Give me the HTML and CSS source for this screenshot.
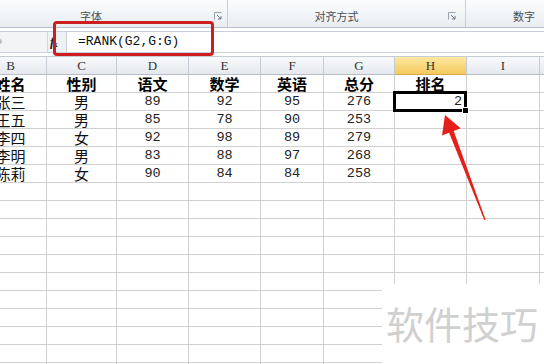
FILE: index.html
```html
<!DOCTYPE html>
<html lang="zh-CN">
<head>
    <meta charset="UTF-8">
    <title>RANK</title>
    <link rel="stylesheet" href="styles.css">
</head>
<body>
    <div class="page">
        <div class="ribbon">
            <div class="group group-font">
                <span class="group-label">字体</span>
                <svg class="launcher" width="8" height="8" viewBox="0 0 8 8"><path d="M0.5 7.5V0.5h7" fill="none" stroke="#9aa3ad"/><path d="M3 3l4 4M4 7h3V4" fill="none" stroke="#6d7782"/></svg>
            </div>
            <div class="group group-align">
                <span class="group-label">对齐方式</span>
                <svg class="launcher" width="8" height="8" viewBox="0 0 8 8"><path d="M0.5 7.5V0.5h7" fill="none" stroke="#9aa3ad"/><path d="M3 3l4 4M4 7h3V4" fill="none" stroke="#6d7782"/></svg>
            </div>
            <div class="group group-number">
                <span class="group-label">数字</span>
            </div>
        </div>

        <div class="formula-bar">
            <div class="name-box"><span class="dot"></span></div>
            <div class="fx"><i>f</i><sub>x</sub></div>
            <div class="formula">=RANK(G2,G:G)</div>
        </div>

        <div class="sheet">
            <div class="colhead">B</div><div class="colhead">C</div><div class="colhead">D</div><div class="colhead">E</div><div class="colhead">F</div><div class="colhead">G</div><div class="colhead active">H</div><div class="colhead">I</div><div class="colhead">J</div>

            <div class="cell title">姓名</div><div class="cell title">性别</div><div class="cell title">语文</div><div class="cell title">数学</div><div class="cell title">英语</div><div class="cell title">总分</div><div class="cell title">排名</div><div class="cell"></div><div class="cell"></div>

            <div class="cell">张三</div><div class="cell">男</div><div class="cell num">89</div><div class="cell num">92</div><div class="cell num">95</div><div class="cell num">276</div><div class="cell num right selected">2</div><div class="cell"></div><div class="cell"></div>
            <div class="cell">王五</div><div class="cell">男</div><div class="cell num">85</div><div class="cell num">78</div><div class="cell num">90</div><div class="cell num">253</div><div class="cell"></div><div class="cell"></div><div class="cell"></div>
            <div class="cell">李四</div><div class="cell">女</div><div class="cell num">92</div><div class="cell num">98</div><div class="cell num">89</div><div class="cell num">279</div><div class="cell"></div><div class="cell"></div><div class="cell"></div>
            <div class="cell">李明</div><div class="cell">男</div><div class="cell num">83</div><div class="cell num">88</div><div class="cell num">97</div><div class="cell num">268</div><div class="cell"></div><div class="cell"></div><div class="cell"></div>
            <div class="cell">陈莉</div><div class="cell">女</div><div class="cell num">90</div><div class="cell num">84</div><div class="cell num">84</div><div class="cell num">258</div><div class="cell"></div><div class="cell"></div><div class="cell"></div>

            <div class="cell"></div><div class="cell"></div><div class="cell"></div><div class="cell"></div><div class="cell"></div><div class="cell"></div><div class="cell"></div><div class="cell"></div><div class="cell"></div>
            <div class="cell"></div><div class="cell"></div><div class="cell"></div><div class="cell"></div><div class="cell"></div><div class="cell"></div><div class="cell"></div><div class="cell"></div><div class="cell"></div>
            <div class="cell"></div><div class="cell"></div><div class="cell"></div><div class="cell"></div><div class="cell"></div><div class="cell"></div><div class="cell"></div><div class="cell"></div><div class="cell"></div>
            <div class="cell"></div><div class="cell"></div><div class="cell"></div><div class="cell"></div><div class="cell"></div><div class="cell"></div><div class="cell"></div><div class="cell"></div><div class="cell"></div>
            <div class="cell"></div><div class="cell"></div><div class="cell"></div><div class="cell"></div><div class="cell"></div><div class="cell"></div><div class="cell"></div><div class="cell"></div><div class="cell"></div>
            <div class="cell"></div><div class="cell"></div><div class="cell"></div><div class="cell"></div><div class="cell"></div><div class="cell"></div><div class="cell"></div><div class="cell"></div><div class="cell"></div>
            <div class="cell"></div><div class="cell"></div><div class="cell"></div><div class="cell"></div><div class="cell"></div><div class="cell"></div><div class="cell"></div><div class="cell"></div><div class="cell"></div>
            <div class="cell"></div><div class="cell"></div><div class="cell"></div><div class="cell"></div><div class="cell"></div><div class="cell"></div><div class="cell"></div><div class="cell"></div><div class="cell"></div>
            <div class="cell"></div><div class="cell"></div><div class="cell"></div><div class="cell"></div><div class="cell"></div><div class="cell"></div><div class="cell"></div><div class="cell"></div><div class="cell"></div>
            <div class="cell"></div><div class="cell"></div><div class="cell"></div><div class="cell"></div><div class="cell"></div><div class="cell"></div><div class="cell"></div><div class="cell"></div><div class="cell"></div>
            <div class="cell"></div><div class="cell"></div><div class="cell"></div><div class="cell"></div><div class="cell"></div><div class="cell"></div><div class="cell"></div><div class="cell"></div><div class="cell"></div>
        </div>

        <!-- 标注：红框 + 箭头 -->
        <div class="highlight"></div>
        <svg class="arrow" width="544" height="364" viewBox="0 0 544 364">
            <polygon points="485.6,219.8 484.4,220.2 449.1,132.7 442.0,135.4 445,115 460.7,128.2 453.7,130.9" fill="#e5201a"/>
        </svg>

        <div class="watermark">软件技巧</div>
    </div>
</body>
</html>
```

FILE: styles.css
```css
body {
    margin: 0;
    background-color: #fff;
    overflow: hidden;
}
.page {
    position: relative;
    width: 544px;
    height: 364px;
    overflow: hidden;
    background-color: #fff;
    font-family: "Noto Sans CJK SC", sans-serif;
}
.ribbon {
    display: flex;
    height: 27px;
    background: linear-gradient(#fbfcfd, #e9edf2);
    border-bottom: 1px solid #b6bfca;
    margin-left: -29px;
}
.group {
    display: flex;
    align-items: center;
    height: 27px;
    box-sizing: border-box;
    border-right: 1px solid #c8ced6;
    padding-top: 4px;
}
.group-font {
    width: 257px;
}
.group-align {
    width: 238px;
}
.group-number {
    flex: 1;
    border-right: none;
    padding-left: 47px;
}
.group-label {
    flex: 1;
    text-align: center;
    font-size: 11px;
    color: #4a4f55;
}
.group-number .group-label {
    flex: none;
}
.launcher {
    margin-right: 5px;
    margin-left: 3px;
}
.group-align .launcher {
    margin-right: 9px;
}
.formula-bar {
    display: flex;
    height: 20px;
    margin-top: 3px;
    margin-bottom: 3px;
    background-color: #eef1f5;
    border-top: 1px solid #c9d0d9;
    border-bottom: 1px solid #c9d0d9;
}
.name-box {
    width: 47px;
    background-color: #f3f4f6;
    border-right: 1px solid #d2d7de;
    position: relative;
}
.dot {
    position: absolute;
    left: -3px;
    top: 7px;
    width: 5px;
    height: 5px;
    border-radius: 50%;
    background-color: #b9bec5;
}
.fx {
    width: 16px;
    padding-left: 2px;
    font-family: "Liberation Serif", serif;
    font-size: 13px;
    font-weight: bold;
    line-height: 20px;
    color: #222;
}
.fx sub {
    font-size: 9px;
    vertical-align: -1px;
    margin-left: -1px;
}
.formula {
    flex: 1;
    background-color: #fff;
    border-left: 1px solid #c9d0d9;
    font-family: "Liberation Mono", monospace;
    font-size: 13px;
    line-height: 20px;
    padding-left: 11px;
    color: #111;
}
.sheet {
    display: grid;
    grid-template-columns: 72px 70px 72px 72px 63px 71px 72px 73px 72px;
    grid-auto-rows: 18px;
    margin-left: -25px;
    border-top: 1px solid #c6ccd4;
}
.colhead, .cell {
    box-sizing: border-box;
    border-right: 1px solid #d0d0d0;
    border-bottom: 1px solid #d0d0d0;
    text-align: center;
    line-height: 17px;
}
.colhead {
    background: linear-gradient(#f8f9fb, #e5e9ee);
    border-right-color: #c3cad3;
    border-bottom-color: #b5bdc8;
    font-family: "Liberation Serif", serif;
    font-size: 13px;
    color: #333;
}
.colhead.active {
    background: linear-gradient(#fde8a0, #f5ca5e);
    border-bottom-color: #d9a943;
}
.cell {
    font-size: 15px;
    color: #111;
    white-space: nowrap;
    overflow: visible;
}
.title {
    font-weight: bold;
    color: #000;
}
.num {
    font-family: "Liberation Mono", monospace;
    font-size: 13.5px;
    color: #222;
}
.right {
    text-align: right;
    padding-right: 4px;
}
.selected {
    position: relative;
}
.selected::after {
    content: "";
    position: absolute;
    left: -2px;
    top: -2px;
    right: -1px;
    bottom: -2px;
    border: 3px solid #000;
}
.selected::before {
    content: "";
    position: absolute;
    right: -3px;
    bottom: -4px;
    width: 5px;
    height: 5px;
    background-color: #000;
    border: 1px solid #fff;
    z-index: 1;
}
.highlight {
    position: absolute;
    left: 53px;
    top: 21px;
    width: 155px;
    height: 29px;
    border: 3px solid #cc1e1e;
    border-radius: 4px;
}
.arrow {
    position: absolute;
    left: 0;
    top: 0;
}
.watermark {
    position: absolute;
    left: 382px;
    top: 284px;
    right: 0;
    bottom: 0;
    background-color: #fff;
    padding: 20px 0 0 4px;
    font-size: 38px;
    line-height: 38px;
    color: #d0d0d0;
}
```
